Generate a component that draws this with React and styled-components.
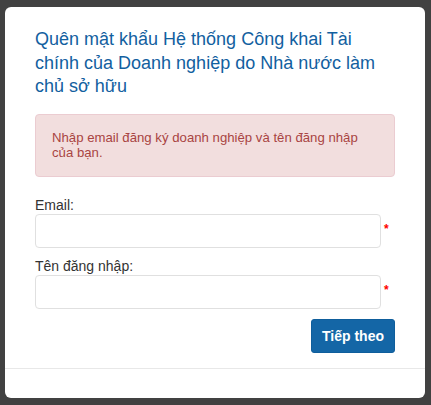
import React, { useState } from 'react'
import styled, { createGlobalStyle } from 'styled-components'

const GlobalStyle = createGlobalStyle`
  html, body {
    margin: 0;
    padding: 0;
    background: #414141;
    font-family: "Liberation Sans", Arial, sans-serif;
  }
  * { box-sizing: border-box; }
`;

const Backdrop = styled.div`
  width: 431px;
  height: 405px;
  background: #414141;
  padding: 7px 6px 0 5px;
`;

const Modal = styled.div`
  width: 420px;
  background: #fff;
  border-radius: 6px;
  overflow: hidden;
`;

const Body = styled.div`
  padding: 21px 30px 15px;
`;

const Title = styled.h4`
  margin: 0 0 15px;
  font-size: 18px;
  font-weight: 400;
  line-height: 23.5px;
  color: #12609f;
`;

const Alert = styled.div`
  background: #f2dede;
  border: 1px solid #ebccd1;
  border-radius: 4px;
  color: #a94442;
  font-size: 13.2px;
  line-height: 15.5px;
  padding: 15px 16px;
  margin-bottom: 20px;
`;

const Form = styled.form`
  display: flex;
  flex-direction: column;
`;

const Label = styled.label`
  display: block;
  font-size: 14px;
  line-height: 17px;
  color: #333;
  margin-top: ${(p) => (p.first ? '0' : '10px')};
`;

const Row = styled.div`
  display: flex;
  align-items: flex-start;
`;

const Input = styled.input`
  width: 346px;
  height: 34px;
  border: 1px solid #e0e0e0;
  border-radius: 4px;
  padding: 6px 12px;
  font-size: 14px;
  font-family: inherit;
  outline: none;
`;

const Required = styled.span`
  color: #f00;
  font-size: 12px;
  font-weight: 700;
  line-height: 1;
  margin: 9px 0 0 3px;
`;

const Actions = styled.div`
  display: flex;
  justify-content: flex-end;
  margin-top: 10px;
`;

const Button = styled.button`
  width: 84px;
  height: 34px;
  border: 1px solid #0f5e9c;
  border-radius: 3px;
  background: #1466a6;
  color: #fff;
  font-family: inherit;
  font-size: 14px;
  font-weight: 700;
  padding: 0;
  cursor: pointer;
`;

const Footer = styled.div`
  border-top: 1px solid #e8e8e8;
  height: 30px;
`;

const App = () => {
  const [email, setEmail] = useState('')
  const [username, setUsername] = useState('')

  const submitHandler = (e) => {
    e.preventDefault()
  }

  return (
    <>
      <GlobalStyle />
      <Backdrop>
        <Modal>
          <Body>
            <Title>Quên mật khẩu Hệ thống Công khai Tài chính của Doanh nghiệp do Nhà nước làm chủ sở hữu</Title>
            <Alert>Nhập email đăng ký doanh nghiệp và tên đăng nhập của bạn.</Alert>
            <Form onSubmit={submitHandler}>
              <Label first>Email:</Label>
              <Row>
                <Input type='text' value={email} onChange={(e) => setEmail(e.target.value)} />
                <Required>*</Required>
              </Row>
              <Label>Tên đăng nhập:</Label>
              <Row>
                <Input type='text' value={username} onChange={(e) => setUsername(e.target.value)} />
                <Required>*</Required>
              </Row>
              <Actions>
                <Button type='submit'>Tiếp theo</Button>
              </Actions>
            </Form>
          </Body>
          <Footer />
        </Modal>
      </Backdrop>
    </>
  )
}

export default App
